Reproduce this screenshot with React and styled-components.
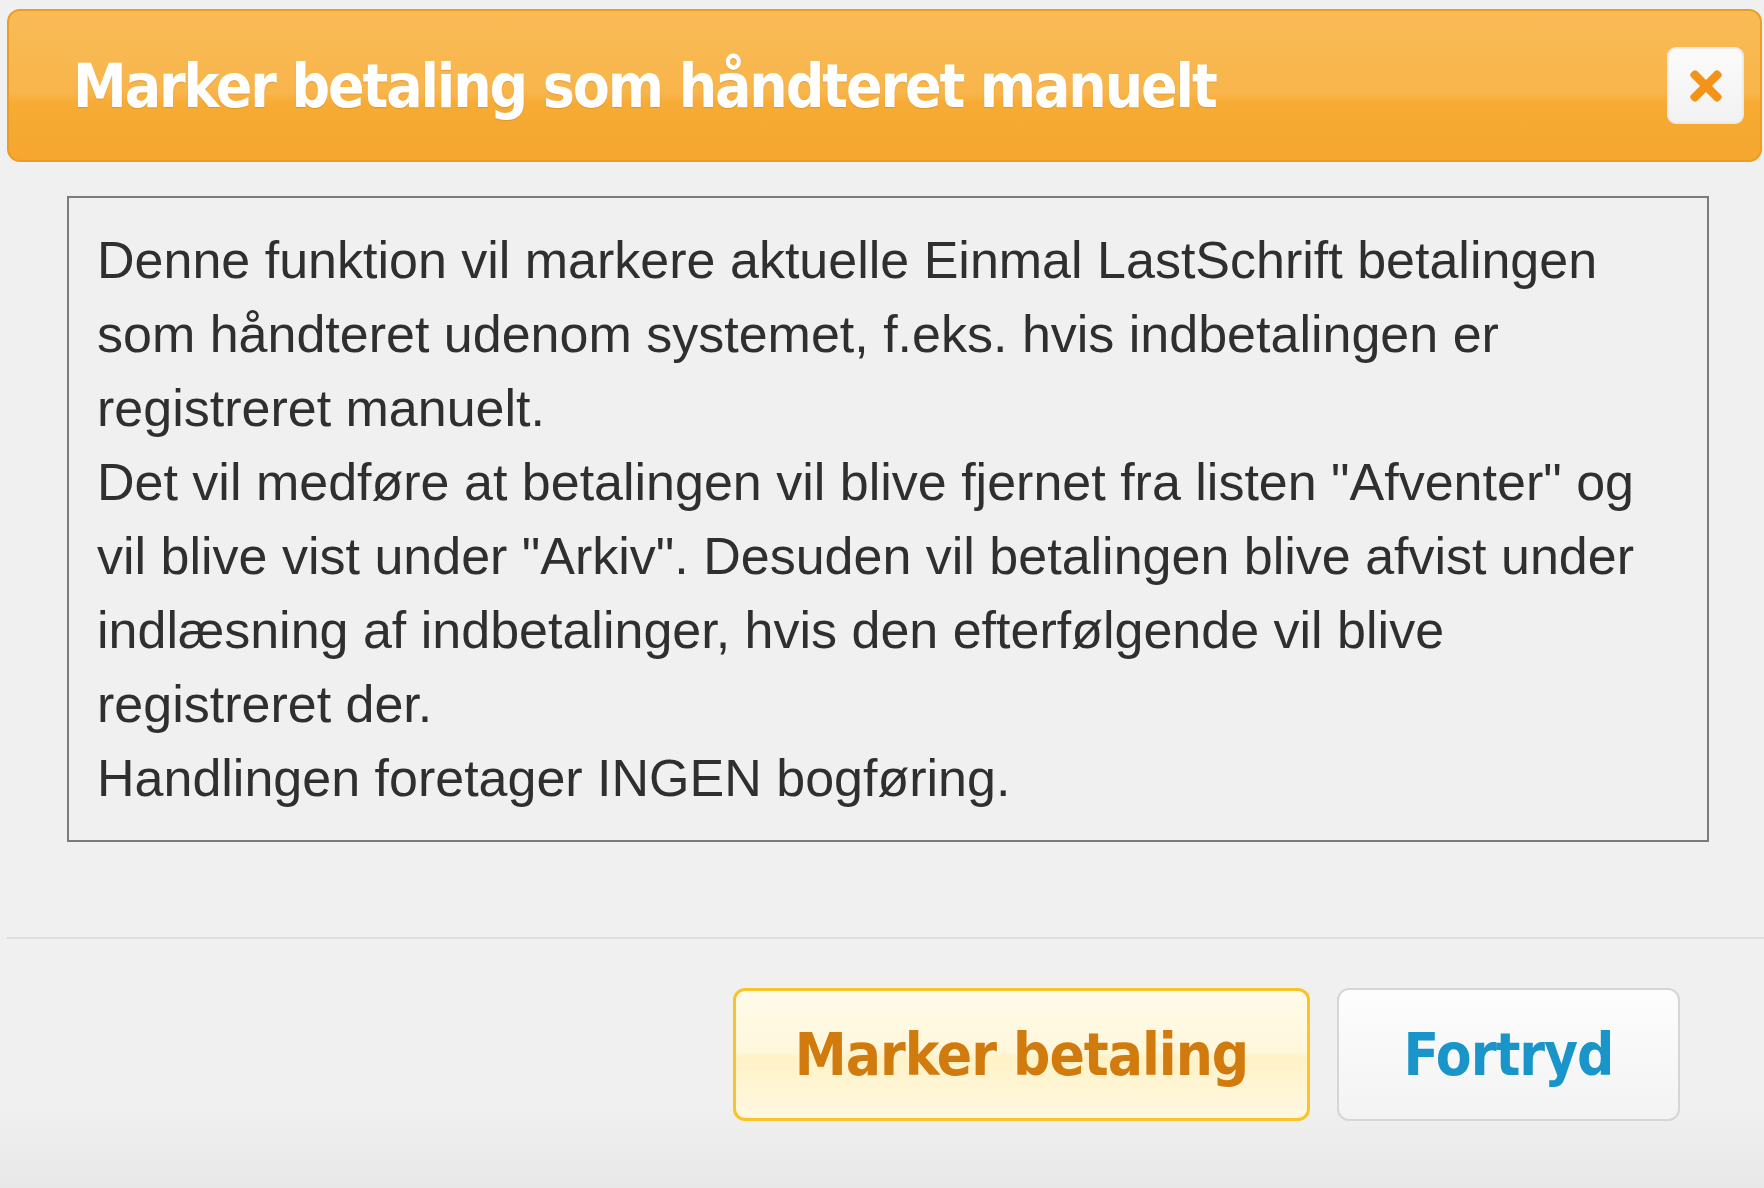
import React from 'react';
import styled, { createGlobalStyle } from 'styled-components';
import { FaTimes } from 'react-icons/fa';

const GlobalStyle = createGlobalStyle`
  html, body {
    margin: 0;
    padding: 0;
  }
  body {
    background: #f0f0f0;
  }
`;

const Dialog = styled.div`
  width: 1764px;
  height: 1188px;
  display: flex;
  flex-direction: column;
  box-sizing: border-box;
  overflow: hidden;
  background: linear-gradient(to bottom, #f0f0f0 0%, #f0f0f0 93%, #e8e8e8 100%);
`;

const Header = styled.div`
  margin: 9px 2px 0 7px;
  height: 153px;
  box-sizing: border-box;
  border: 2px solid #eb9c22;
  border-radius: 13px;
  background: linear-gradient(to bottom, #f9bb56 0%, #f8b54b 55%, #f6ab34 62%, #f5a72e 100%);
  display: flex;
  align-items: center;
  justify-content: space-between;
  padding: 0 16px 0 64px;
`;

const Title = styled.h1`
  margin: 0;
  color: #fff;
  font-family: "DejaVu Sans Condensed", "DejaVu Sans", sans-serif;
  font-stretch: condensed;
  font-weight: bold;
  font-size: 60px;
  letter-spacing: -2.1px;
  text-shadow: 0 1px 1px rgba(160, 90, 0, 0.25);
`;

const CloseButton = styled.button`
  width: 77px;
  height: 77px;
  box-sizing: border-box;
  padding: 0;
  border: 2px solid #eaeaea;
  border-radius: 9px;
  background: linear-gradient(to bottom, #fbfbfb, #f2f2f2);
  color: #f39419;
  font-size: 46px;
  display: flex;
  align-items: center;
  justify-content: center;
  cursor: pointer;
`;

const Body = styled.div`
  padding: 34px 55px 0 67px;
`;

const TextBox = styled.div`
  border: 2px solid #7b7b7b;
  padding: 25px 40px 25px 28px;
  font-family: "Liberation Sans", Arial, sans-serif;
  font-size: 52px;
  line-height: 74px;
  color: #2f2f2f;
`;

const Paragraph = styled.p`
  margin: 0;
`;

const Separator = styled.hr`
  margin: 95px 0 0 7px;
  border: 0;
  height: 2px;
  background: #dedede;
`;

const Footer = styled.div`
  display: flex;
  justify-content: flex-end;
  gap: 27px;
  padding: 49px 84px 0 0;
`;

const Button = styled.button`
  height: 133px;
  width: ${p => p.$width}px;
  box-sizing: border-box;
  border-radius: 12px;
  font-family: "DejaVu Sans Condensed", "DejaVu Sans", sans-serif;
  font-stretch: condensed;
  font-weight: bold;
  font-size: 58px;
  letter-spacing: -1px;
  cursor: pointer;
  border: ${p => (p.$primary ? '3px solid #f7c52a' : '2px solid #d6d6d6')};
  color: ${p => (p.$primary ? '#d17b0e' : '#1a95c9')};
  background: ${p =>
    p.$primary
      ? 'linear-gradient(to bottom, #fffbe9 0%, #fff7dc 48%, #fff2c6 52%, #fff8e2 100%)'
      : 'linear-gradient(to bottom, #fdfdfd 0%, #f8f8f8 50%, #f3f3f3 100%)'};
`;

export default function App() {
  return (
    <>
      <GlobalStyle />
      <Dialog>
        <Header>
          <Title>Marker betaling som håndteret manuelt</Title>
          <CloseButton aria-label="Luk">
            <FaTimes />
          </CloseButton>
        </Header>
        <Body>
          <TextBox>
            <Paragraph>
              Denne funktion vil markere aktuelle Einmal LastSchrift betalingen som håndteret
              udenom systemet, f.eks. hvis indbetalingen er registreret manuelt.
            </Paragraph>
            <Paragraph>
              Det vil medføre at betalingen vil blive fjernet fra listen "Afventer" og vil blive
              vist under "Arkiv". Desuden vil betalingen blive afvist under indlæsning af
              indbetalinger, hvis den efterfølgende vil blive registreret der.
            </Paragraph>
            <Paragraph>Handlingen foretager INGEN bogføring.</Paragraph>
          </TextBox>
        </Body>
        <Separator />
        <Footer>
          <Button $primary $width={577}>Marker betaling</Button>
          <Button $width={343}>Fortryd</Button>
        </Footer>
      </Dialog>
    </>
  );
}
